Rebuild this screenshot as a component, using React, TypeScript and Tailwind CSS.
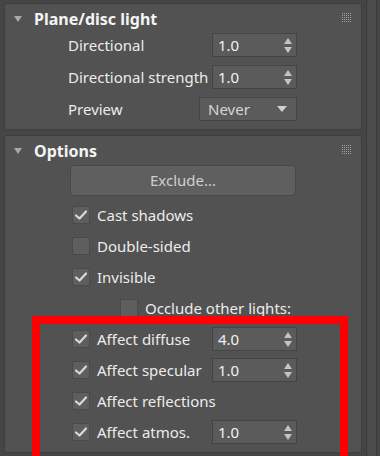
import React from "react";

const font = { fontFamily: '"Noto Sans", "Open Sans", sans-serif' };

function Grip() {
  const dots = Array.from({ length: 25 });
  return (
    <div className="grid grid-cols-5 gap-[1px] w-[9px] h-[9px]">
      {dots.map((_, i) => (
        <div key={i} className="w-[1px] h-[1px] bg-[#a0a0a0]" />
      ))}
    </div>
  );
}

function Header({ title }: { title: string }) {
  return (
    <div className="flex items-center h-[29px] relative">
      <svg width="8" height="6" viewBox="0 0 8 6" className="ml-[9px]">
        <polygon points="0,0 8,0 4,6" fill="#a9a9a9" />
      </svg>
      <span className="ml-[12px] text-[16px] font-bold text-[#f4f4f4] leading-none">{title}</span>
      <div className="absolute right-[10px] top-[9px]">
        <Grip />
      </div>
    </div>
  );
}

function Spinner({ value }: { value: string }) {
  return (
    <div className="w-[85px] h-[24px] bg-[#5b5b5b] border border-[#444444] flex items-center justify-between pl-[5px] pr-[4px]">
      <span className="text-[15px] text-[#f2f2f2] leading-none">{value}</span>
      <svg width="8" height="15" viewBox="0 0 8 15">
        <polygon points="4,0 8,6 0,6" fill="#c4c4c4" />
        <polygon points="0,9 8,9 4,15" fill="#c4c4c4" />
      </svg>
    </div>
  );
}

function Dropdown({ value }: { value: string }) {
  return (
    <div className="w-[98px] h-[24px] bg-[#5b5b5b] border border-[#444444] flex items-center justify-between pl-[8px] pr-[9px]">
      <span className="text-[15px] text-[#d6d6d6] leading-none">{value}</span>
      <svg width="10" height="6" viewBox="0 0 10 6">
        <polygon points="0,0 10,0 5,6" fill="#d0d0d0" />
      </svg>
    </div>
  );
}

function Check({ checked }: { checked: boolean }) {
  return (
    <div className="w-[18px] h-[18px] bg-[#5e5e5e] border border-[#4a4a4a] flex items-center justify-center shrink-0">
      {checked && (
        <svg width="12" height="10" viewBox="0 0 12 10">
          <path d="M1 5.5 L4.5 8.5 L11 1.5" stroke="#dadada" strokeWidth="2.2" fill="none" strokeLinecap="round" strokeLinejoin="round" />
        </svg>
      )}
    </div>
  );
}

function LabelRow({ label, children }: { label: string; children: React.ReactNode }) {
  return (
    <div className="h-[24px] flex items-center pl-[63px] pr-[64px]">
      <span className="flex-1 text-[15px] text-[#ececec] leading-none whitespace-nowrap">{label}</span>
      {children}
    </div>
  );
}

function CheckRow({ label, checked, indent = 67, children }: { label: string; checked: boolean; indent?: number; children?: React.ReactNode }) {
  return (
    <div className="h-[24px] flex items-center pr-[64px]" style={{ paddingLeft: indent }}>
      <Check checked={checked} />
      <span className="ml-[7px] flex-1 text-[15px] text-[#ececec] leading-none whitespace-nowrap">{label}</span>
      {children}
    </div>
  );
}

export default function App() {
  return (
    <div className="w-[380px] h-[456px] bg-[#454545] flex relative overflow-hidden" style={font}>
      <div className="w-[358px] ml-[4px] flex flex-col">
        <div className="mt-[3px] h-[127px] bg-[#525252] border border-[#3e3e3e] rounded-[3px] flex flex-col">
          <Header title="Plane/disc light" />
          <div className="flex flex-col gap-[8px]">
            <LabelRow label="Directional"><Spinner value="1.0" /></LabelRow>
            <LabelRow label="Directional strength"><Spinner value="1.0" /></LabelRow>
            <LabelRow label="Preview"><Dropdown value="Never" /></LabelRow>
          </div>
        </div>
        <div className="mt-[5px] h-[318px] bg-[#525252] border border-[#3e3e3e] rounded-[3px] flex flex-col">
          <Header title="Options" />
          <div className="ml-[65px] w-[226px] h-[31px] bg-[#5f5f5f] border border-[#474747] rounded-[4px] flex items-center justify-center">
            <span className="text-[15px] text-[#cfcfcf] leading-none">Exclude...</span>
          </div>
          <div className="flex flex-col gap-[7px] mt-[7px]">
            <CheckRow label="Cast shadows" checked />
            <CheckRow label="Double-sided" checked={false} />
            <CheckRow label="Invisible" checked />
            <CheckRow label="Occlude other lights:" checked={false} indent={115} />
            <CheckRow label="Affect diffuse" checked><Spinner value="4.0" /></CheckRow>
            <CheckRow label="Affect specular" checked><Spinner value="1.0" /></CheckRow>
            <CheckRow label="Affect reflections" checked />
            <CheckRow label="Affect atmos." checked><Spinner value="1.0" /></CheckRow>
          </div>
        </div>
      </div>
      <div className="ml-[4px] w-[11px] h-full bg-[#4b4b4b] border-l border-r border-[#3a3a3a]" />
      <div className="absolute left-[32px] top-[316px] w-[316px] h-[150px] border-[8px] border-[#ff0000]" />
    </div>
  );
}
